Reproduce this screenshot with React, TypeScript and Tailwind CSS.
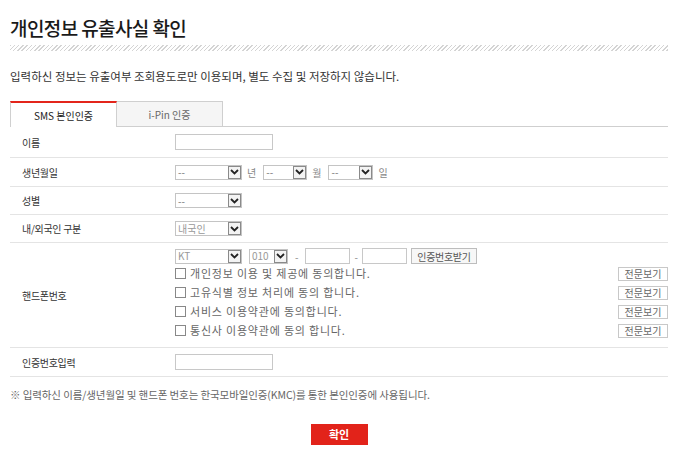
import React from "react";

const F = "font-['Noto_Sans_CJK_KR','Noto_Sans',sans-serif]";

function Sel({ w, text, gray }: { w: string; text: string; gray?: boolean }) {
  return (
    <div className={`flex h-[15px] items-center justify-between border border-[#c4c4c4] bg-white ${w}`}>
      <span className={`pl-[2px] text-[10px] leading-none ${gray ? "text-[#999]" : "text-[#777]"}`}>{text}</span>
      <span className="flex h-[13px] w-[13px] items-center justify-center border border-[#8a8a8a] bg-[#f3f3f3]">
        <svg width="9" height="6" viewBox="0 0 9 6">
          <polyline points="1,1 4.5,4.5 8,1" fill="none" stroke="#222" strokeWidth="1.8" />
        </svg>
      </span>
    </div>
  );
}

function Row({ label, h, children }: { label: string; h: string; children: React.ReactNode }) {
  return (
    <div className={`flex items-center border-b border-[#e4e4e4] ${h}`}>
      <div className="w-[165px] pl-[12px] text-[10px] tracking-[-0.3px] text-[#333]">{label}</div>
      <div className="flex flex-1 items-center">{children}</div>
    </div>
  );
}

function Check({ text }: { text: string }) {
  return (
    <div className="flex h-[19px] items-center">
      <span className="h-[11px] w-[11px] border border-[#888] bg-white" />
      <span className="ml-[4px] text-[11px] tracking-[0.8px] text-[#666]">{text}</span>
      <span className="ml-auto flex h-[14px] w-[50px] items-center justify-center border border-[#c8c8c8] bg-white text-[10px] text-[#666]">
        전문보기
      </span>
    </div>
  );
}

export default function App() {
  return (
    <div className={`w-[683px] h-[470px] bg-white px-[10px] pt-[14px] ${F}`}>
      <h1 className="text-[19px] font-medium leading-[28px] tracking-[-0.6px] text-[#1a1a1a]">개인정보 유출사실 확인</h1>
      <div className="mt-[3px] h-[6px] w-[658px] bg-[repeating-linear-gradient(135deg,#d4d4d4_0px,#d4d4d4_1px,#ffffff_1px,#ffffff_3px)]" />
      <p className="mt-[17px] text-[11.5px] leading-[16px] tracking-[0px] text-[#333]">
        입력하신 정보는 유출여부 조회용도로만 이용되며, 별도 수집 및 저장하지 않습니다.
      </p>

      <div className="mt-[17px] flex h-[26px] w-[658px]">
        <div className="flex w-[107px] items-center justify-center border-x border-t-2 border-x-[#d0d0d0] border-t-[#e3251b] bg-white text-[10px] text-[#222]">
          SMS 본인인증
        </div>
        <div className="flex w-[106px] items-center justify-center border border-l-0 border-[#cfcfcf] bg-[#f5f5f5] text-[10px] text-[#666]">
          i-Pin 인증
        </div>
        <div className="flex-1 border-b border-[#cfcfcf]" />
      </div>

      <div className="w-[658px]">
        <Row label="이름" h="h-[31px]">
          <div className="h-[16px] w-[98px] border border-[#c8c8c8] bg-white" />
        </Row>
        <Row label="생년월일" h="h-[29px]">
          <Sel w="w-[67px]" text="--" />
          <span className="ml-[5px] mr-[7px] text-[10px] text-[#888]">년</span>
          <Sel w="w-[44px]" text="--" />
          <span className="ml-[5px] mr-[7px] text-[10px] text-[#888]">월</span>
          <Sel w="w-[45px]" text="--" />
          <span className="ml-[5px] text-[10px] text-[#888]">일</span>
        </Row>
        <Row label="성별" h="h-[28px]">
          <Sel w="w-[67px]" text="--" />
        </Row>
        <Row label="내/외국인 구분" h="h-[28px]">
          <Sel w="w-[67px]" text="내국인" gray />
        </Row>
        <div className="flex h-[105px] items-center border-b border-[#e4e4e4]">
          <div className="w-[165px] pl-[12px] text-[10px] tracking-[-0.3px] text-[#333]">핸드폰번호</div>
          <div className="flex flex-1 flex-col self-stretch pt-[5px]">
            <div className="flex h-[16px] items-center">
              <Sel w="w-[67px]" text="KT" gray />
              <div className="ml-[7px]">
                <Sel w="w-[39px]" text="010" gray />
              </div>
              <span className="mx-[7px] text-[10px] text-[#888]">-</span>
              <div className="h-[16px] w-[45px] border border-[#c8c8c8] bg-white" />
              <span className="mx-[4px] text-[10px] text-[#888]">-</span>
              <div className="h-[16px] w-[45px] border border-[#c8c8c8] bg-white" />
              <span className="ml-[4px] flex h-[16px] w-[66px] items-center justify-center border border-[#bdbdbd] bg-[#f7f7f7] text-[10px] tracking-[-0.3px] text-[#555]">
                인증번호받기
              </span>
            </div>
            <Check text="개인정보 이용 및 제공에 동의합니다." />
            <Check text="고유식별 정보 처리에 동의 합니다." />
            <Check text="서비스 이용약관에 동의합니다." />
            <Check text="통신사 이용약관에 동의 합니다." />
          </div>
        </div>
        <Row label="인증번호입력" h="h-[29px]">
          <div className="h-[16px] w-[98px] border border-[#c8c8c8] bg-white" />
        </Row>
      </div>

      <p className="mt-[11px] text-[10.5px] leading-[14px] tracking-[-0.1px] text-[#666]">
        ※ 입력하신 이름/생년월일 및 핸드폰 번호는 한국모바일인증(KMC)를 통한 본인인증에 사용됩니다.
      </p>

      <div className="mt-[22px] flex w-[658px] justify-center">
        <button className="h-[21px] w-[57px] bg-[#e2231a] text-[11px] font-bold text-white">확인</button>
      </div>
    </div>
  );
}
